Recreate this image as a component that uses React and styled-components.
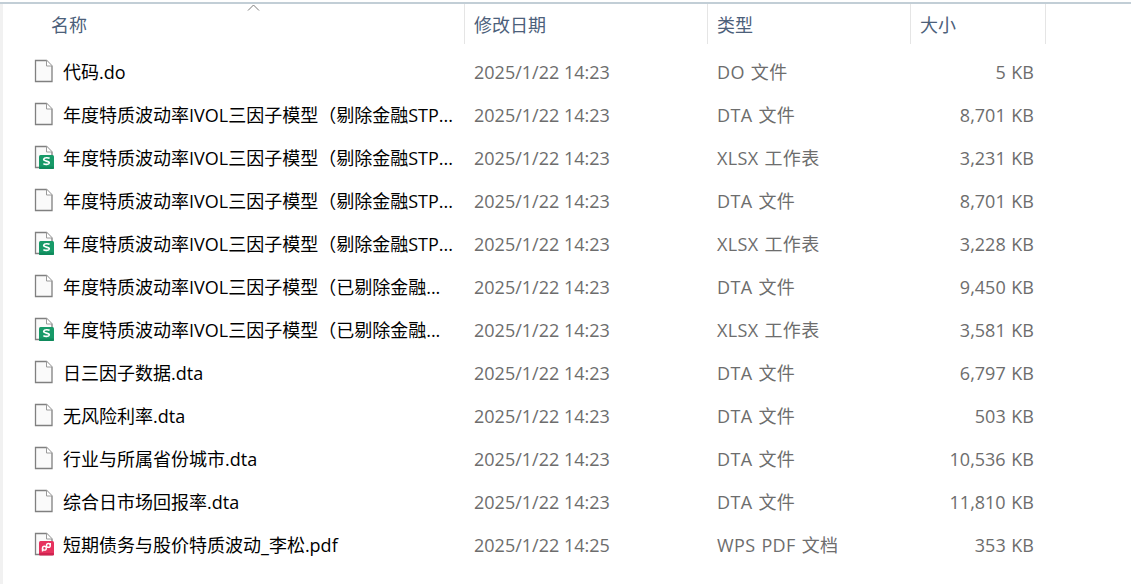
import React from 'react';
import styled, { createGlobalStyle } from 'styled-components';

const GlobalStyle = createGlobalStyle`
  html, body {
    margin: 0;
    padding: 0;
    background: #fff;
  }
  body {
    font-family: "Segoe UI", "Open Sans", "Noto Sans CJK SC", sans-serif;
  }
`;

const COLS = '462px 243px 203px 135px';

const files = [
  { name: '代码.do', date: '2025/1/22 14:23', type: 'DO 文件', size: '5 KB', icon: 'blank' },
  { name: '年度特质波动率IVOL三因子模型（剔除金融STP...', date: '2025/1/22 14:23', type: 'DTA 文件', size: '8,701 KB', icon: 'blank' },
  { name: '年度特质波动率IVOL三因子模型（剔除金融STP...', date: '2025/1/22 14:23', type: 'XLSX 工作表', size: '3,231 KB', icon: 'xlsx' },
  { name: '年度特质波动率IVOL三因子模型（剔除金融STP...', date: '2025/1/22 14:23', type: 'DTA 文件', size: '8,701 KB', icon: 'blank' },
  { name: '年度特质波动率IVOL三因子模型（剔除金融STP...', date: '2025/1/22 14:23', type: 'XLSX 工作表', size: '3,228 KB', icon: 'xlsx' },
  { name: '年度特质波动率IVOL三因子模型（已剔除金融...', date: '2025/1/22 14:23', type: 'DTA 文件', size: '9,450 KB', icon: 'blank' },
  { name: '年度特质波动率IVOL三因子模型（已剔除金融...', date: '2025/1/22 14:23', type: 'XLSX 工作表', size: '3,581 KB', icon: 'xlsx' },
  { name: '日三因子数据.dta', date: '2025/1/22 14:23', type: 'DTA 文件', size: '6,797 KB', icon: 'blank' },
  { name: '无风险利率.dta', date: '2025/1/22 14:23', type: 'DTA 文件', size: '503 KB', icon: 'blank' },
  { name: '行业与所属省份城市.dta', date: '2025/1/22 14:23', type: 'DTA 文件', size: '10,536 KB', icon: 'blank' },
  { name: '综合日市场回报率.dta', date: '2025/1/22 14:23', type: 'DTA 文件', size: '11,810 KB', icon: 'blank' },
  { name: '短期债务与股价特质波动_李松.pdf', date: '2025/1/22 14:25', type: 'WPS PDF 文档', size: '353 KB', icon: 'pdf' },
];

const Page = styled.div`
  width: 1131px;
  height: 584px;
  box-sizing: border-box;
  overflow: hidden;
  background: #fff;
  padding-top: 2px;
`;

const TopLine = styled.div`
  height: 2px;
  background: #c2ced6;
`;

const Body = styled.div`
  height: 580px;
  box-sizing: border-box;
  border-left: 3px solid #f1f1f1;
`;

const Header = styled.div`
  position: relative;
  display: grid;
  grid-template-columns: ${COLS};
  height: 40px;
`;

const HeadCell = styled.div`
  box-sizing: border-box;
  height: 40px;
  padding-left: ${p => p.$pad}px;
  border-right: 1px solid #e5e5e5;
  display: flex;
  align-items: center;
  font-size: 18px;
  color: #4c607a;
`;

const SortArrow = styled.svg`
  position: absolute;
  left: 244px;
  top: 0;
  width: 13px;
  height: 7px;
`;

const List = styled.div`
  display: flex;
  flex-direction: column;
  padding-top: 5px;
`;

const Row = styled.div`
  display: grid;
  grid-template-columns: ${COLS};
  height: 43px;
  align-items: center;
  font-size: 18px;
`;

const NameCell = styled.div`
  display: flex;
  align-items: center;
  padding-left: 31px;
  gap: 9px;
  color: #000;
  white-space: nowrap;
`;

const InfoCell = styled.div`
  color: #6d6d6d;
  padding-left: ${p => p.$pad}px;
  padding-top: 2px;
  white-space: nowrap;
`;

const TypeCell = styled(InfoCell)`
  padding-top: 0;
  letter-spacing: 0.35px;
  word-spacing: 1px;
`;

const SizeCell = styled(InfoCell)`
  padding-left: 0;
  padding-right: 12px;
  text-align: right;
  word-spacing: 1px;
`;

const FileIcon = ({ kind }) => (
  <svg width="20" height="24" viewBox="0 0 20 24" style={{ flex: 'none' }}>
    <path d="M1.5 1.5H12.5L18 7V22.5H1.5Z" fill="#fafafa" stroke="#808080" strokeWidth="1.3" />
    <path d="M12.5 1.5V7H18" fill="#fff" stroke="#9a9a9a" strokeWidth="1" />
    {kind === 'xlsx' && (
      <g>
        <rect x="5" y="10" width="15" height="14" rx="1.5" fill="#179a68" />
        <rect x="5" y="21.5" width="15" height="2.5" rx="1" fill="#0f8a5c" />
        <path d="M15.6 13.4C14.6 12.5 10.2 12.2 9.7 14.2 9.2 16.6 15.4 15.6 15.3 18 15.1 19.8 10.8 19.6 9.4 18.6" fill="none" stroke="#fff" strokeWidth="1.6" />
      </g>
    )}
    {kind === 'pdf' && (
      <g>
        <rect x="5" y="9" width="15" height="14" rx="1.5" fill="#e6335f" />
        <rect x="5" y="21" width="15" height="2.5" rx="1" fill="#d0224f" />
        <circle cx="10.4" cy="16.2" r="1.9" fill="none" stroke="#fff" strokeWidth="1.4" />
        <circle cx="14.4" cy="13.4" r="1.9" fill="none" stroke="#fff" strokeWidth="1.4" />
        <path d="M8.5 16.2V19.6M16.3 13.4V11" stroke="#fff" strokeWidth="1.4" />
      </g>
    )}
  </svg>
);

export default function App() {
  return (
    <Page>
      <GlobalStyle />
      <TopLine />
      <Body>
        <Header>
          <HeadCell $pad={48}>名称</HeadCell>
          <HeadCell $pad={9}>修改日期</HeadCell>
          <HeadCell $pad={9}>类型</HeadCell>
          <HeadCell $pad={9}>大小</HeadCell>
          <SortArrow viewBox="0 0 13 7">
            <path d="M1 6.5L6.5 1L12 6.5" fill="none" stroke="#7a7a7a" strokeWidth="1" />
          </SortArrow>
        </Header>
        <List>
          {files.map((f, id) => (
            <Row key={id}>
              <NameCell>
                <FileIcon kind={f.icon} />
                <span>{f.name}</span>
              </NameCell>
              <InfoCell $pad={9}>{f.date}</InfoCell>
              <TypeCell $pad={9}>{f.type}</TypeCell>
              <SizeCell>{f.size}</SizeCell>
            </Row>
          ))}
        </List>
      </Body>
    </Page>
  );
}
